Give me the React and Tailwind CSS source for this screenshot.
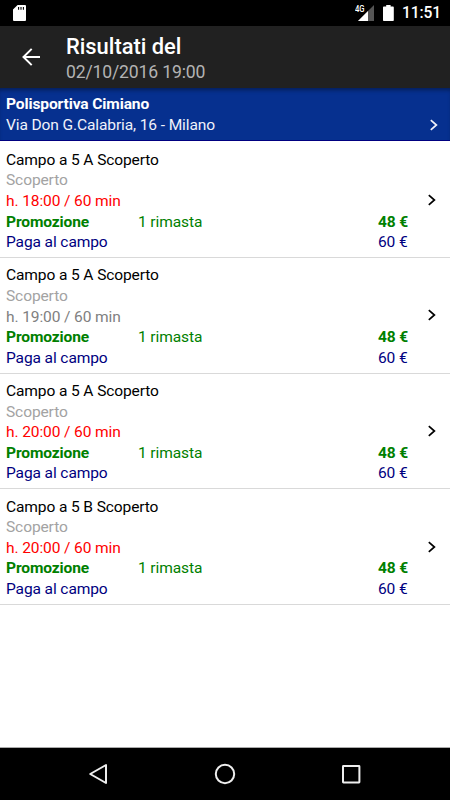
import { clsx } from 'clsx'

const slots = [
  { court: 'Campo a 5 A Scoperto', time: 'h. 18:00 / 60 min', match: true },
  { court: 'Campo a 5 A Scoperto', time: 'h. 19:00 / 60 min', match: false },
  { court: 'Campo a 5 A Scoperto', time: 'h. 20:00 / 60 min', match: true },
  { court: 'Campo a 5 B Scoperto', time: 'h. 20:00 / 60 min', match: true },
]

const Chevron = ({ className }) => (
  <svg className={className} width="8" height="12" viewBox="0 0 8 12" fill="none" stroke="currentColor" strokeWidth="1.7">
    <path d="M.8 1.2 6.4 6 .8 10.8" />
  </svg>
)

const StatusBar = () => (
  <div className="h-[26px] shrink-0 bg-black text-white flex items-center pl-[13px] pr-[9px] tracking-normal">
    <svg width="13" height="16" viewBox="0 0 13 16">
      <path d="M4.6 0H12a1 1 0 0 1 1 1v14a1 1 0 0 1-1 1H1a1 1 0 0 1-1-1V4.6Z" fill="#fff" />
      <path d="M5.6 2v2.8M8 2v2.8M10.4 2v2.8" stroke="#000" strokeWidth="1.1" />
    </svg>
    <div className="ml-auto flex items-center">
      <div className="relative w-5 h-4">
        <svg className="absolute right-0 top-0" width="16" height="16" viewBox="0 0 16 16">
          <path d="M16 0v16H0Z" fill="#555" />
          <path d="M10 6v10H0Z" fill="#fff" />
          <path d="M0 0h6.5v8H0Z" fill="#000" />
        </svg>
        <span className="absolute left-[1px] top-0 text-[9px] leading-[9px] font-medium origin-left scale-x-[0.85]">4G</span>
      </div>
      <svg className="ml-[9px]" width="11" height="16" viewBox="0 0 11 16" fill="#fff">
        <path d="M3.2 0h4.4v1.6H10a.8.8 0 0 1 .8.8v12.8a.8.8 0 0 1-.8.8H.8a.8.8 0 0 1-.8-.8V2.4a.8.8 0 0 1 .8-.8h2.4Z" />
      </svg>
      <span className="ml-[8px] text-[15.6px] tracking-[-0.1px] leading-none font-medium translate-y-[1px]">11:51</span>
    </div>
  </div>
)

const AppBar = () => (
  <header className="h-[62px] shrink-0 bg-[#212121] flex items-center pl-[22px] tracking-normal">
    <svg width="18" height="18" viewBox="0 0 18 18" fill="none" stroke="#fff" strokeWidth="2">
      <path d="M18 9H1.6M9.7 .9 1.5 9l8.2 8.1" />
    </svg>
    <div className="ml-[26px] pt-[5px]">
      <h1 className="text-[21.9px] leading-[26px] font-medium text-white">Risultati del</h1>
      <p className="text-[17.6px] tracking-[-0.16px] leading-[25px] text-[#b3b3b3]">02/10/2016 19:00</p>
    </div>
  </header>
)

const VenueHeader = () => (
  <div className="h-[53px] shrink-0 bg-[#06308f] text-white px-[6px] pt-[6px] leading-[20.6px] border-b border-[#000080] shadow-[inset_0_4px_4px_-2px_rgba(0,0,0,0.4)]">
    <p className="font-bold">Polisportiva Cimiano</p>
    <div className="flex items-center justify-between pr-[6px] text-[#f0f2fa]">
      <p>Via Don G.Calabria, 16 - Milano</p>
      <Chevron />
    </div>
  </div>
)

const SlotRow = ({ slot }) => (
  <li className="h-[115.6px] flex items-center border-b border-[#d9d9d9] pl-[6px] pr-[14px] leading-[20.6px]">
    <div className="flex-1 pt-[3px]">
      <p className="text-black">{slot.court}</p>
      <p className="text-[#a3a3a3]">Scoperto</p>
      <p className={clsx(slot.match ? 'text-[#ff0000]' : 'text-[#808080]')}>{slot.time}</p>
      <div className="flex text-[#008000]">
        <p className="w-[132px] font-bold">Promozione</p>
        <p className="flex-1">1 rimasta</p>
        <p className="w-[50px] font-bold">48 €</p>
      </div>
      <div className="flex text-[#000080]">
        <p className="flex-1">Paga al campo</p>
        <p className="w-[50px]">60 €</p>
      </div>
    </div>
    <Chevron className="text-black" />
  </li>
)

const NavBar = () => (
  <nav className="h-[52px] shrink-0 bg-black flex items-center justify-between pl-[88px] pr-[89px]">
    <svg width="20" height="22" viewBox="0 0 20 22" fill="none" stroke="#eee" strokeWidth="2" strokeLinejoin="round">
      <path d="M18 2v18L2.2 11Z" />
    </svg>
    <svg width="22" height="22" viewBox="0 0 22 22" fill="none" stroke="#eee" strokeWidth="2">
      <circle cx="11" cy="11" r="9.2" />
    </svg>
    <svg width="20" height="20" viewBox="0 0 20 20" fill="none" stroke="#eee" strokeWidth="2">
      <rect x="2" y="2" width="16.4" height="16.4" rx=".4" />
    </svg>
  </nav>
)

const App = () => (
  <div className="w-[450px] h-[800px] flex flex-col overflow-hidden bg-white text-[15.55px] tracking-[-0.12px] font-[Roboto,sans-serif]">
    <StatusBar />
    <AppBar />
    <VenueHeader />
    <ul className="flex-1 pt-[1.5px] border-b border-[#aaa]">
      {slots.map((slot, i) => (
        <SlotRow key={i} slot={slot} />
      ))}
    </ul>
    <NavBar />
  </div>
)

export default App
